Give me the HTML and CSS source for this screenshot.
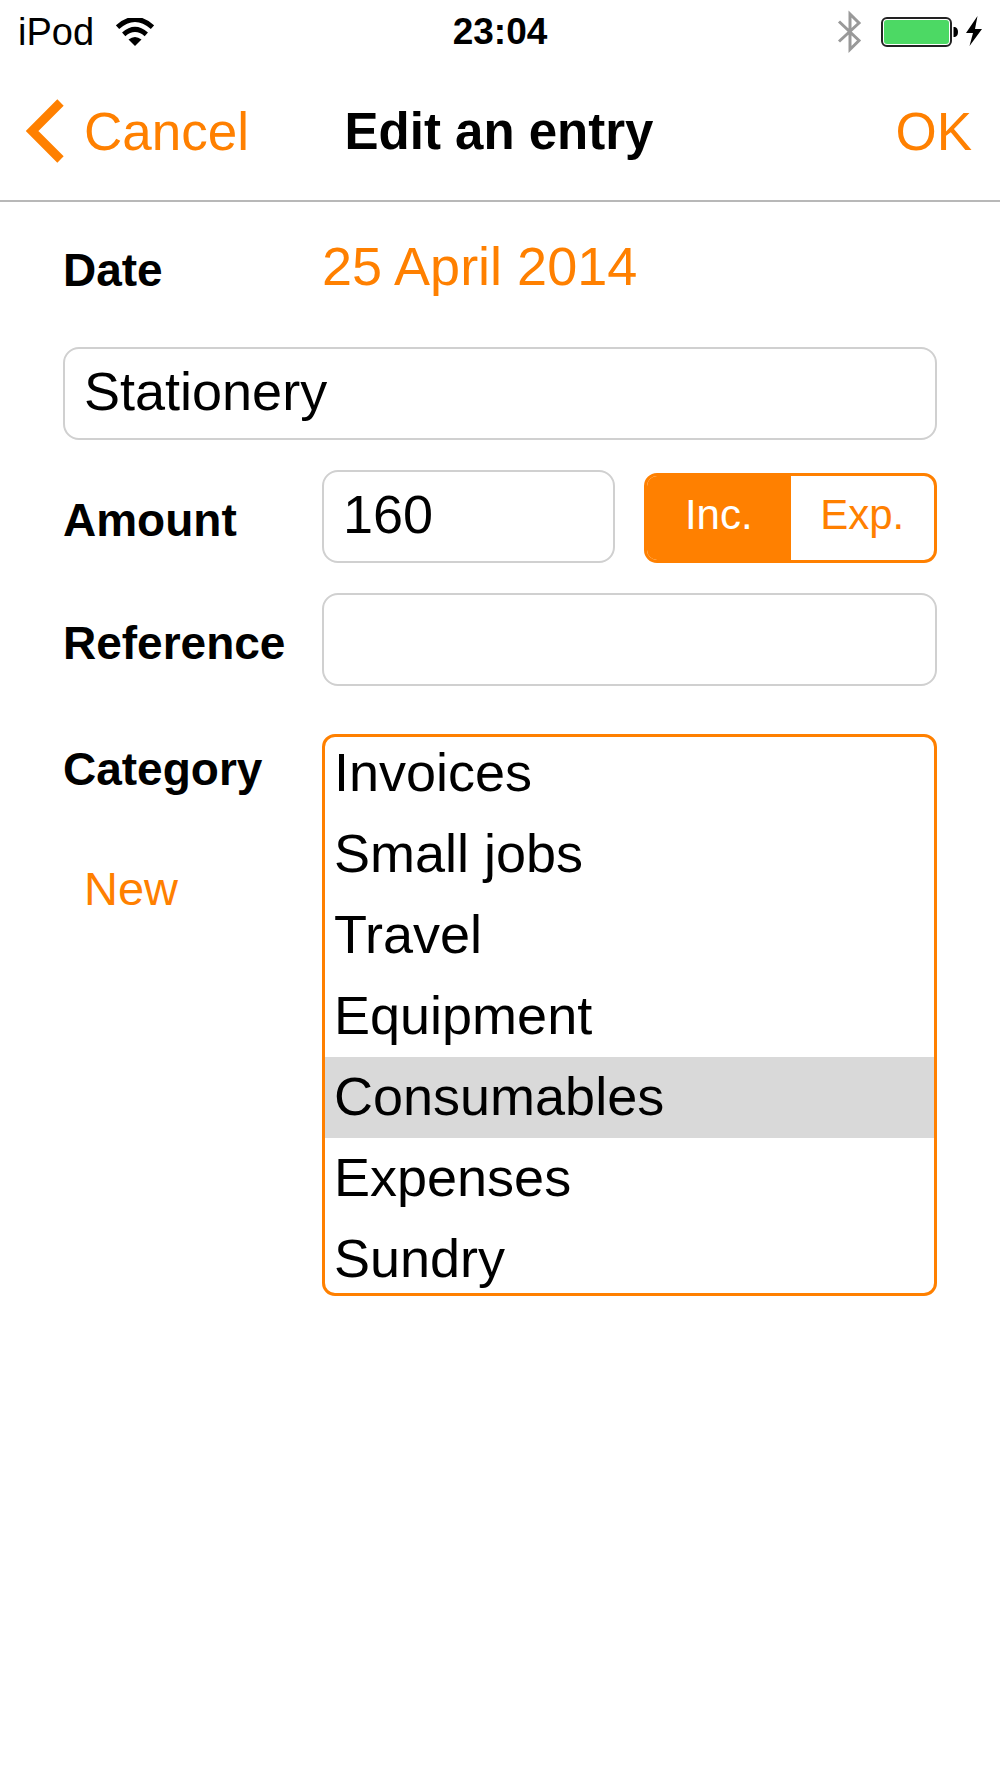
FILE: index.html
```html
<!DOCTYPE html>
<html lang="en">
<head>
<meta charset="utf-8">
<meta name="viewport" content="width=device-width, initial-scale=1">
<title>Edit an entry</title>
<link rel="stylesheet" href="styles.css">
</head>
<body>
<div class="status">
  <div class="status-left">
    <span>iPod</span>
    <svg width="38" height="28" viewBox="0 0 38 28" aria-hidden="true">
      <path d="M1.5 9.200Q19-6.500 36.500 9.200" fill="none" stroke="#000" stroke-width="5"/>
      <path d="M7.700 16.300Q19 6.500 30.300 16.300" fill="none" stroke="#000" stroke-width="5"/>
      <path d="M12.500 21.500Q19 16.500 25.500 21.500L19 28Z"/>
    </svg>
  </div>
  <span class="clock">23:04</span>
  <div class="status-right">
    <svg width="145" height="44" viewBox="0 0 145 44" aria-hidden="true">
      <path d="M2 11.500L22 30.500L13 39.500V4L22 13L2 31.500" fill="none" stroke="#999" stroke-width="3"/>
      <rect x="45" y="8" width="69" height="28" rx="5" fill="#fff" stroke="#222" stroke-width="2"/>
      <rect x="47" y="10" width="65" height="24" rx="3" fill="#4cd964"/>
      <path d="M116.500 17H118Q121 18 121 22T118 27H116.500Z"/>
      <path d="M140.500 6L129 23H136L132.500 36L145 19H138Z"/>
    </svg>
  </div>
</div>
<header class="nav">
  <button class="back" type="button">
    <svg width="38" height="64" viewBox="0 0 38 64" aria-hidden="true">
      <path d="M34.500 3.500L6 32L34.500 60.500" fill="none" stroke="#ff8000" stroke-width="9"/>
    </svg>
    Cancel
  </button>
  <h1>Edit an entry</h1>
  <button class="ok" type="submit" form="entry">OK</button>
</header>
<form class="form" id="entry">
  <div class="row date-row">
    <label class="name" for="date">Date</label>
    <button class="date" id="date" type="button">25 April 2014</button>
  </div>
  <input class="field" type="text" aria-label="Description" value="Stationery">
  <div class="row">
    <label class="name" for="amount">Amount</label>
    <div class="amount">
      <input class="field" id="amount" type="text" inputmode="decimal" value="160">
      <div class="segments" role="radiogroup" aria-label="Type">
        <input type="radio" name="type" id="inc" checked><label for="inc">Inc.</label>
        <input type="radio" name="type" id="exp"><label for="exp">Exp.</label>
      </div>
    </div>
  </div>
  <div class="row">
    <label class="name" for="reference">Reference</label>
    <input class="field" id="reference" type="text">
  </div>
  <div class="row category-row">
    <div class="side">
      <label class="name" for="category">Category</label>
      <button class="new" type="button">New</button>
    </div>
    <select class="list" id="category" size="7">
      <option>Invoices</option>
      <option>Small jobs</option>
      <option>Travel</option>
      <option>Equipment</option>
      <option selected>Consumables</option>
      <option>Expenses</option>
      <option>Sundry</option>
    </select>
  </div>
</form>
</body>
</html>
```
FILE: styles.css
```css
* {
  box-sizing: border-box;
}

body {
  margin: 0;
  background: #fff;
  color: #000;
  font-family: "Liberation Sans", Arial, sans-serif;
}

button,
input,
select {
  font: inherit;
  color: inherit;
}

button {
  padding: 0;
  border: 0;
  background: none;
  color: #ff8000;
  text-align: left;
  cursor: pointer;
}

.status,
.nav {
  display: grid;
  grid-template-columns: 1fr auto 1fr;
  align-items: center;
}

.status {
  height: 64px;
  padding: 0 18px;
  font-size: 38px;
}

.status-left {
  display: flex;
  align-items: center;
  gap: 22px;
}

.status-right {
  display: flex;
  justify-content: flex-end;
}

.clock {
  font-size: 37px;
  font-weight: bold;
}

.nav {
  height: 138px;
  padding: 0 28px 2px 26px;
  border-bottom: 2px solid #b8b8b8;
  font-size: 53px;
}

.nav h1 {
  margin: 0;
  font-size: 51px;
}

.back {
  display: flex;
  align-items: center;
  gap: 20px;
}

.ok {
  justify-self: end;
}

.form {
  display: flex;
  flex-direction: column;
  gap: 30px;
  padding: 18px 63px;
}

.row {
  display: grid;
  grid-template-columns: 259px 1fr;
  align-items: start;
}

.date-row {
  min-height: 97px;
}

.category-row {
  margin-top: 3px;
}

.name {
  display: block;
  height: 93px;
  font-size: 46px;
  font-weight: bold;
  line-height: 101px;
}

.date {
  font-size: 54px;
  line-height: 93px;
}

.field {
  width: 100%;
  min-width: 0;
  height: 93px;
  padding: 0 19px 6px;
  border: 2px solid #d0d0d0;
  border-radius: 16px;
  background: #fff;
  font-size: 54px;
}

.amount {
  display: grid;
  grid-template-columns: 1fr 1fr;
  gap: 29px;
  align-items: end;
}

.segments {
  display: flex;
  height: 90px;
  overflow: hidden;
  border: 3px solid #ff8000;
  border-radius: 13px;
}

.segments input {
  position: absolute;
  opacity: 0;
}

.segments label {
  flex: 1;
  color: #ff8000;
  font-size: 42px;
  line-height: 78px;
  text-align: center;
}

.segments input:checked + label {
  background: #ff8000;
  color: #fff;
}

.side {
  display: flex;
  flex-direction: column;
  gap: 30px;
}

.new {
  padding-left: 21px;
  font-size: 47px;
  line-height: 93px;
}

.list {
  width: 100%;
  height: 562px;
  margin-top: 15px;
  padding: 0;
  overflow: hidden;
  border: 3px solid #ff8000;
  border-radius: 13px;
  background: #fff;
  font-size: 54px;
  outline: none;
}

.list option {
  min-height: 0;
  padding: 8px 9px 11px;
  color: #000;
}

.list option:first-child {
  padding-top: 4px;
}

.list option:checked {
  background: #d9d9d9;
}
```
